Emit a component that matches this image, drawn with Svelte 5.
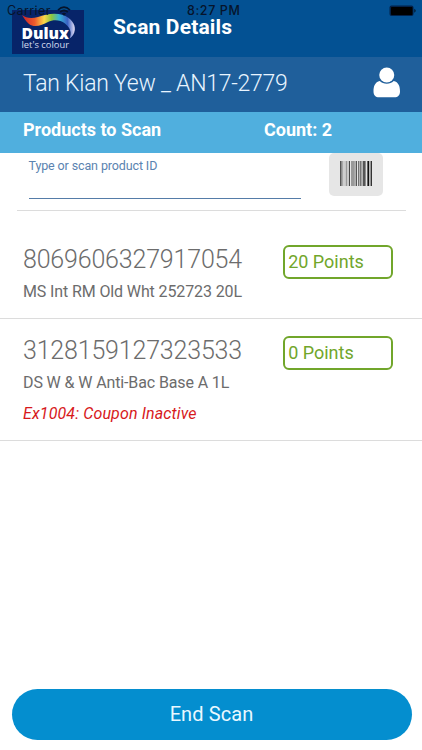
<script>
  let productId = $state('');

  const user = { name: 'Tan Kian Yew', code: 'AN17-2779' };

  const products = [
    { id: '8069606327917054', name: 'MS Int RM Old Wht 252723 20L', points: 20 },
    { id: '3128159127323533', name: 'DS W & W Anti-Bac Base A 1L', points: 0, error: 'Ex1004: Coupon Inactive' }
  ];

  // x, width, colour
  const bars = [
    [0, 1.6, '#555'], [2.2, 0.8, '#999'], [3.6, 0.8, '#aaa'], [5.6, 1.6, '#999'],
    [7.7, 0.8, '#aaa'], [9, 0.9, '#333'], [11, 3.8, '#999'], [15.7, 1.1, '#333'],
    [18, 0.8, '#555'], [19.7, 1, '#444'], [21.6, 0.7, '#444'], [23, 2.6, '#555'],
    [27.4, 1.6, '#111'], [29.6, 0.7, '#777'], [30.7, 1.3, '#333']
  ];
</script>

<div class="page">
  <div class="status">
    <span class="carrier">Carrier</span>
    <svg class="wifi" viewBox="0 0 14 10" width="14" height="10">
      <path d="M1 4Q7 -1.6 13 4M3.2 6.2Q7 2.8 10.8 6.2" fill="none" stroke="#06142b" stroke-width="1.7" />
      <path d="M4.8 7.6Q7 5.9 9.2 7.6L7 9.8Z" fill="#06142b" />
    </svg>
    <span class="time">8:27 PM</span>
    <svg class="battery" viewBox="0 0 28 12" width="28" height="12">
      <rect x="0.5" y="0.5" width="24" height="10.5" rx="2" fill="#03224a" />
      <rect x="2" y="2" width="21.5" height="8" rx="0.8" fill="#000" />
      <path d="M25.5 3.8Q27.5 5.8 25.5 7.8Z" fill="#000" />
    </svg>
  </div>

  <header>
    <svg class="logo" viewBox="0 0 72 44" width="72" height="44">
      <defs>
        <linearGradient id="swoosh" x1="0" x2="1" y1="0" y2="0">
          <stop offset="0" stop-color="#c8232c" />
          <stop offset="0.24" stop-color="#ee5a2c" />
          <stop offset="0.42" stop-color="#fbd84a" />
          <stop offset="0.56" stop-color="#8cc63f" />
          <stop offset="0.7" stop-color="#35b5d8" />
          <stop offset="0.86" stop-color="#3b62c4" />
          <stop offset="1" stop-color="#e6e0f6" />
        </linearGradient>
      </defs>
      <rect width="72" height="44" fill="#072469" />
      <path d="M10 5C14 8 19 9 26 7C34 4 43 2.500 51 5C59 8 63.500 14 62.800 20C62.300 24 60.500 26.500 57.500 28.500C60 23 58.500 18 53 13.500C48 9.500 41 9.500 36 12C30 15.500 22 18 17 14C13.500 11 12 8 10 5Z" fill="url(#swoosh)" />
      <text class="brand" x="9.500" y="28.700" textLength="47.500" lengthAdjust="spacingAndGlyphs">Dulux</text>
      <text class="tagline" x="9.500" y="38" textLength="47.500" lengthAdjust="spacingAndGlyphs">let's colour</text>
    </svg>
    <h1>Scan Details</h1>
  </header>

  <div class="user">
    <span>{user.name} _ {user.code}</span>
    <svg viewBox="0 0 28 31" width="28" height="31">
      <path d="M6.800 14C2 15.200 0.500 19 0.500 24.500C0.500 28.300 2.600 30.300 6 30.300H21.500C24.900 30.300 27 28.300 27 24.500C27 19 25.500 15.200 20.700 14C18.800 15.800 16.500 16.700 13.750 16.700C11 16.700 8.700 15.800 6.800 14Z" fill="#fff" />
      <circle cx="13.750" cy="8" r="7.500" fill="#fff" />
    </svg>
  </div>

  <div class="summary">
    <span>Products to Scan</span>
    <span>Count: {products.length}</span>
  </div>

  <div class="entry">
    <label>
      Type or scan product ID
      <input type="text" bind:value={productId} />
    </label>
    <button class="scan" aria-label="Scan barcode">
      <svg viewBox="0 0 32 25" width="32" height="25">
        {#each bars as [x, w, colour]}
          <rect {x} y="0" width={w} height="25" fill={colour} />
        {/each}
      </svg>
    </button>
  </div>

  <ul>
    {#each products as product (product.id)}
      <li>
        <div class="details">
          <div class="id">{product.id}</div>
          <div class="name">{product.name}</div>
          {#if product.error}
            <div class="error">{product.error}</div>
          {/if}
        </div>
        <div class="points">{product.points} Points</div>
      </li>
    {/each}
  </ul>

  <button class="end">End Scan</button>
</div>

<style>
  :global(body) {
    background: #fff;
  }

  .page {
    position: relative;
    display: flex;
    flex-direction: column;
    width: 422px;
    height: 750px;
    overflow: hidden;
    font-family: Roboto, sans-serif;
    white-space: nowrap;
  }

  /* system status bar, lies over the header */
  .status {
    position: absolute;
    top: 0;
    left: 0;
    right: 0;
    z-index: 1;
    height: 22px;
    font-family: Inter, sans-serif;
    font-size: 12.5px;
    line-height: 22px;
    color: #06142b;
  }

  .carrier {
    position: absolute;
    left: 7px;
    letter-spacing: 0.4px;
  }

  .wifi {
    position: absolute;
    left: 57px;
    top: 6px;
  }

  .time {
    position: absolute;
    left: 187px;
    font-weight: 500;
    letter-spacing: 0.6px;
  }

  .battery {
    position: absolute;
    left: 389px;
    top: 5px;
  }

  header {
    display: flex;
    height: 57px;
    background: #035193;
  }

  .logo {
    margin: 10px 0 0 12px;
  }

  .brand {
    font-family: "Open Sans", sans-serif;
    font-size: 16px;
    font-weight: 800;
    fill: #fff;
  }

  .tagline {
    font-family: "Open Sans", sans-serif;
    font-size: 8.5px;
    fill: #d5dcf0;
  }

  h1 {
    margin: 14px 0 0 29px;
    font-size: 21px;
    font-weight: 700;
    line-height: 26px;
    letter-spacing: 0.15px;
    color: #fff;
  }

  .user {
    display: flex;
    justify-content: space-between;
    height: 55px;
    padding: 0 21px 0 23px;
    background: #1f5f9b;
    font-size: 23px;
    font-weight: 300;
    line-height: 53px;
    letter-spacing: -0.25px;
    color: #e9f5ff;
  }

  .user svg {
    margin-top: 10px;
  }

  .summary {
    display: grid;
    grid-template-columns: 241px 1fr;
    height: 41px;
    padding-left: 23px;
    background: #50afde;
    font-size: 18px;
    font-weight: 700;
    line-height: 35px;
    color: #fff;
  }

  .entry {
    display: flex;
    justify-content: space-between;
    height: 58px;
    margin: 0 16px 0 17px;
    padding: 0 23px 0 11.5px;
    border-bottom: 1px solid #dcdcdc;
    box-sizing: border-box;
  }

  label {
    width: 272px;
    padding-top: 5px;
    font-size: 12.5px;
    line-height: 16px;
    letter-spacing: -0.12px;
    color: #5a83b0;
  }

  input {
    display: block;
    width: 100%;
    height: 25px;
    padding: 0;
    border: 0;
    border-bottom: 1.5px solid #557ca8;
    box-sizing: border-box;
    background: none;
    outline: none;
  }

  .scan {
    display: flex;
    align-items: center;
    justify-content: center;
    width: 54px;
    height: 43px;
    padding: 0 0 2px;
    border: 0;
    border-radius: 5px;
    background: #e6e6e6;
  }

  ul {
    margin: 17px 0 0;
    padding: 0;
    list-style: none;
  }

  li {
    display: flex;
    align-items: flex-start;
    padding: 17px 29px 11px 23px;
    border-bottom: 1px solid #dcdcdc;
  }

  .details {
    width: 260.5px;
    color: #6c6c6c;
  }

  .id {
    height: 32px;
    font-size: 25px;
    font-weight: 300;
    line-height: 29px;
    letter-spacing: -0.18px;
  }

  .name {
    font-size: 16px;
    line-height: 30px;
    letter-spacing: -0.12px;
  }

  .error {
    font-size: 16px;
    font-style: italic;
    line-height: 31px;
    letter-spacing: 0.13px;
    color: #d7191c;
  }

  .points {
    width: 110px;
    height: 34px;
    padding-left: 3px;
    border: 2px solid #71a62b;
    border-radius: 6px;
    box-sizing: border-box;
    font-size: 18px;
    line-height: 30px;
    color: #71a62b;
  }

  .end {
    height: 51px;
    margin: auto 10.5px 10px 11.5px;
    padding: 0 0 2px;
    border: 0;
    border-radius: 26px;
    background: #048ecf;
    font-family: inherit;
    font-size: 20px;
    letter-spacing: 0.1px;
    color: #e9f8ff;
  }
</style>
